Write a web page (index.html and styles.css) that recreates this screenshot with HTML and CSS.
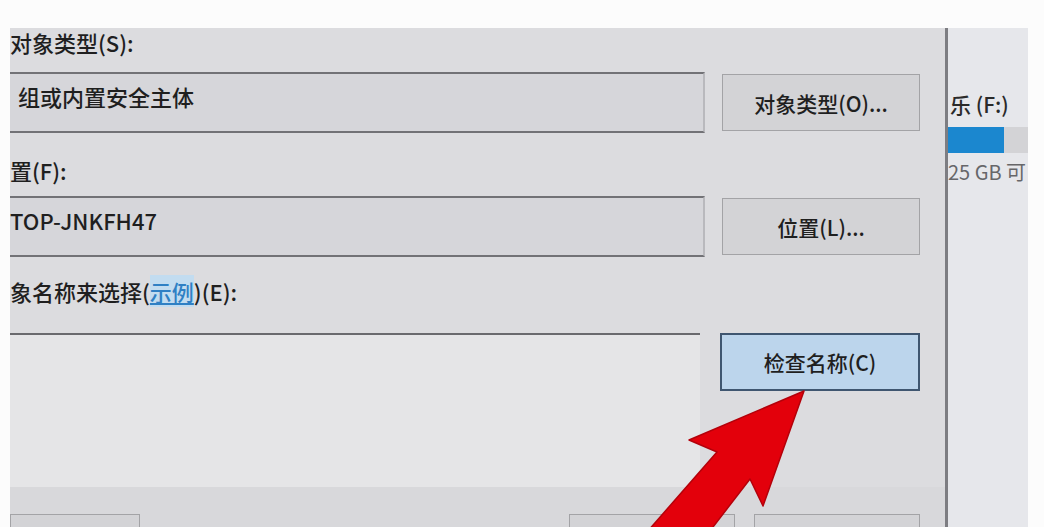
FILE: index.html
```html
<!DOCTYPE html>
<html lang="zh-CN">
<head>
    <meta charset="UTF-8">
    <meta name="viewport" content="width=device-width, initial-scale=1.0">
    <title>选择用户或组</title>
    <link rel="stylesheet" href="styles.css">
</head>
<body>
    <div class="screen">
        <div class="dialog">
            <div class="form">
                <div class="label label-first">对象类型(S):</div>
                <div class="field"><span class="field-text">组或内置安全主体</span></div>
                <button class="btn">对象类型(O)...</button>

                <div class="label label-second">置(F):</div>
                <div class="field"><span class="field-text flush">TOP-JNKFH47</span></div>
                <button class="btn">位置(L)...</button>

                <div class="label label-third">象名称来选择(<a class="link">示例</a>)(E):</div>
                <div class="names"></div>
                <button class="btn btn-focus">检查名称(C)</button>
            </div>
            <div class="footer">
                <button class="btn btn-small btn-adv"></button>
                <div class="footer-right">
                    <button class="btn btn-small btn-ok"></button>
                    <button class="btn btn-small btn-cancel"></button>
                </div>
            </div>
        </div>

        <!-- 后面的资源管理器窗口 -->
        <div class="explorer">
            <div class="drive-name">乐 (F:)</div>
            <div class="drive-bar"><div class="drive-used" style="width: 56px;"></div></div>
            <div class="drive-free">25 GB 可</div>
        </div>

        <!-- 红色指示箭头 -->
        <svg class="arrow" width="1044" height="527" viewBox="0 0 1044 527">
            <polygon points="804,391 763,506 750,479 703,540 640,540 717,452 689,440"
                     fill="#e3000b" stroke="#b4000a" stroke-width="1.5" stroke-linejoin="round"/>
        </svg>
    </div>
</body>
</html>
```

FILE: styles.css
```css
* {
    margin: 0;
    padding: 0;
    box-sizing: border-box;
}
body {
    background-color: #fcfcfc;
    color: #1f1f1f;
    font-family: "Noto Sans CJK SC", "Noto Sans", sans-serif;
    font-size: 22px;
    font-weight: 500;
    overflow: hidden;
}
.screen {
    position: relative;
    display: flex;
    width: 1044px;
    height: 527px;
    padding: 28px 0 0 10px;
    overflow: hidden;
}
.dialog {
    width: 938px;
    height: 499px;
    background-color: #dcdcdf;
    border-right: 3px solid #7d7d82;
    display: flex;
    flex-direction: column;
}
.form {
    display: grid;
    grid-template-columns: 695px 198px;
    column-gap: 17px;
    align-items: center;
}
.label {
    grid-column: 1 / 3;
    line-height: 28px;
    white-space: nowrap;
}
.label-first {
    padding-bottom: 16px;
}
.label-second {
    padding: 23px 0 12px;
}
.label-third {
    padding: 20px 0 28px;
}
.field {
    height: 61px;
    background-color: #d6d6da;
    border-top: 2px solid #727276;
    border-bottom: 2px solid #727276;
    border-right: 2px solid #b9b9bd;
    padding: 8px 0 0 8px;
    line-height: 28px;
}
.field-text.flush {
    margin-left: -8px;
}
.link {
    color: #2f80c4;
    background-color: #c2dcf0;
    text-decoration: underline;
}
.names {
    height: 154px;
    margin-right: 5px;
    background-color: #e5e5e7;
    border-top: 2px solid #6a6a6e;
    align-self: start;
}
.btn {
    height: 57px;
    font-family: inherit;
    font-size: 21px;
    font-weight: 500;
    color: #1f1f1f;
    background-color: #d3d3d6;
    border: 1px solid #a3a3a6;
}
.btn-focus {
    align-self: start;
    height: 58px;
    margin-left: -2px;
    width: 200px;
    background-color: #bcd5ec;
    border: 2px solid #3f5670;
}
.footer {
    flex: 1;
    display: flex;
    justify-content: space-between;
    padding: 27px 25px 0 0;
    background-color: #d8d8db;
}
.footer-right {
    display: flex;
    gap: 19px;
}
.btn-small {
    height: 40px;
}
.btn-adv {
    width: 130px;
}
.btn-ok {
    width: 166px;
}
.btn-cancel {
    width: 166px;
}
.explorer {
    width: 80px;
    height: 499px;
    background-color: #e6e7eb;
    overflow: hidden;
    white-space: nowrap;
    font-size: 20px;
    font-weight: 400;
    padding-top: 60px;
}
.drive-name {
    padding-left: 2px;
    font-size: 21px;
    font-weight: 500;
    line-height: 32px;
    color: #2a2a2a;
}
.drive-bar {
    margin-top: 7px;
    height: 26px;
    background-color: #d3d3d6;
}
.drive-used {
    height: 100%;
    background-color: #1b87cf;
}
.drive-free {
    margin-top: 5px;
    font-size: 20px;
    line-height: 28px;
    color: #666669;
}
.arrow {
    position: absolute;
    left: 0;
    top: 0;
}
```
